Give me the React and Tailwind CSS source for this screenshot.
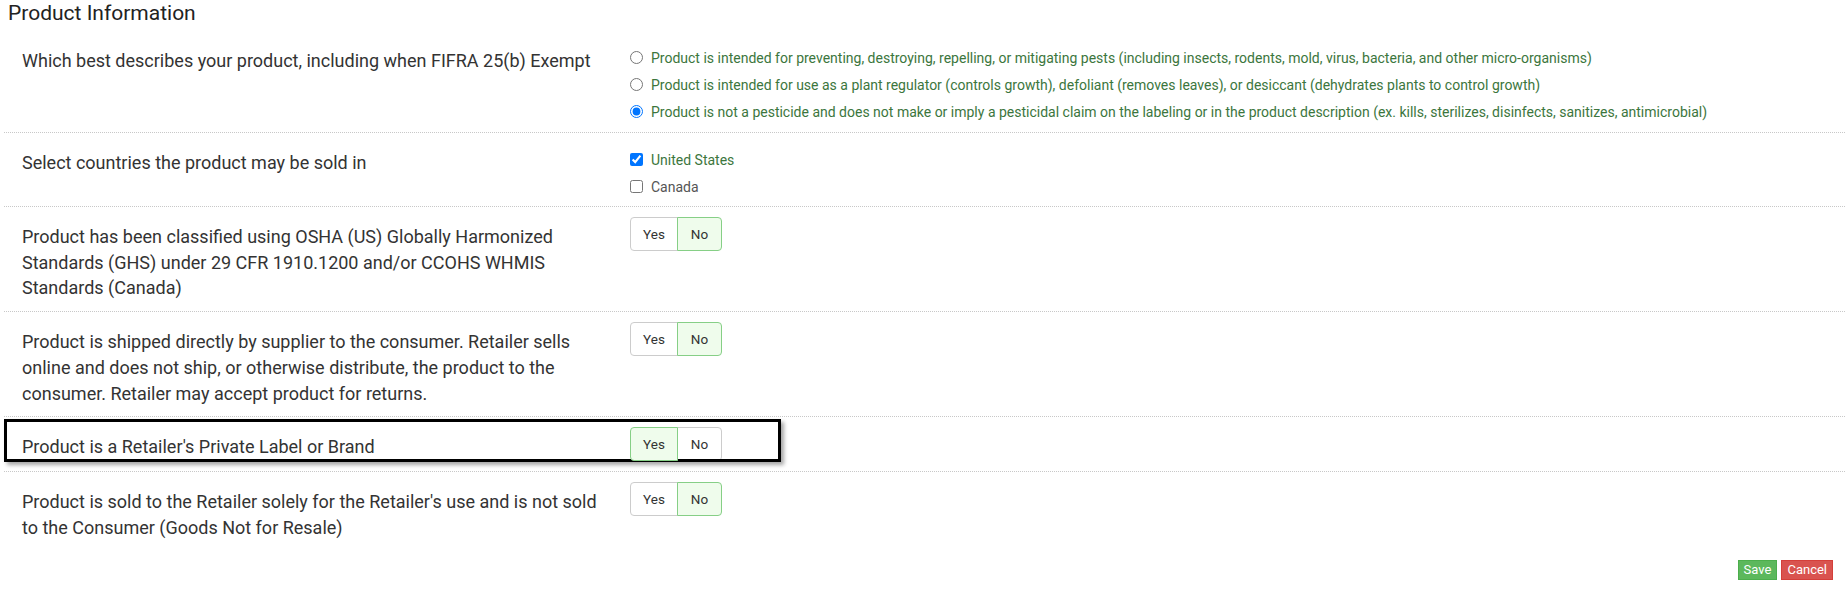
import React from "react";

const YesNo = ({ value }) => {
  const base = "h-[34px] flex items-center justify-center text-[13.5px] text-[#333] border";
  return (
    <div className="flex mt-0">
      <div
        className={
          value === "yes"
            ? base + " w-[48px] rounded-l-[4px] border-[#86cf86] bg-[#effcec] relative z-10"
            : base + " w-[48px] rounded-l-[4px] border-[#cccccc] bg-white"
        }
      >
        Yes
      </div>
      <div
        className={
          value === "no"
            ? base + " w-[45px] -ml-px rounded-r-[4px] border-[#86cf86] bg-[#effcec] relative z-10"
            : base + " w-[45px] -ml-px rounded-r-[4px] border-[#cccccc] bg-white"
        }
      >
        No
      </div>
    </div>
  );
};

const Label = ({ children }) => (
  <div className="w-[626px] shrink-0 pl-[18px] pr-[30px] pt-[7px] text-[18px] leading-[25.7px] text-[#333]">
    {children}
  </div>
);

const Option = ({ type, checked, children, color }) => (
  <label className="h-[27px] flex items-center">
    <input
      type={type}
      name={type === "radio" ? "kind" : undefined}
      defaultChecked={checked}
      className="m-0 w-[13px] h-[13px] shrink-0"
    />
    <span className={color + " ml-[8px] text-[14px] leading-[20px] whitespace-nowrap"}>{children}</span>
  </label>
);

export default function App() {
  return (
    <div
      className="w-full h-[590px] bg-white overflow-hidden"
      style={{ fontFamily: "Roboto, 'Noto Sans', sans-serif" }}
    >
      <div className="pl-[8px] pt-[1px] h-[31px] text-[21px] leading-[24px] text-[#222]">
        Product Information
      </div>

      <div className="ml-[4px]">
        {/* Row 1 */}
        <div className="flex pt-[10px] pb-[7px]">
          <Label>Which best describes your product, including when FIFRA 25(b) Exempt</Label>
          <div className="pt-[3px]">
            <Option type="radio" color="text-[#3c763d]">
              Product is intended for preventing, destroying, repelling, or mitigating pests (including insects, rodents, mold, virus, bacteria, and other micro-organisms)
            </Option>
            <Option type="radio" color="text-[#3c763d]">
              Product is intended for use as a plant regulator (controls growth), defoliant (removes leaves), or desiccant (dehydrates plants to control growth)
            </Option>
            <Option type="radio" checked color="text-[#3c763d]">
              Product is not a pesticide and does not make or imply a pesticidal claim on the labeling or in the product description (ex. kills, sterilizes, disinfects, sanitizes, antimicrobial)
            </Option>
          </div>
        </div>

        {/* Row 2 */}
        <div className="flex pt-[10px] pb-[6px] border-t border-dotted border-[#c8c8c8]">
          <Label>Select countries the product may be sold in</Label>
          <div className="pt-[3px]">
            <Option type="checkbox" checked color="text-[#3c763d]">
              United States
            </Option>
            <Option type="checkbox" color="text-[#555]">
              Canada
            </Option>
          </div>
        </div>

        {/* Row 3 */}
        <div className="flex py-[10px] border-t border-dotted border-[#c8c8c8]">
          <Label>
            Product has been classified using OSHA (US) Globally Harmonized Standards (GHS) under 29 CFR 1910.1200 and/or CCOHS WHMIS Standards (Canada)
          </Label>
          <YesNo value="no" />
        </div>

        {/* Row 4 */}
        <div className="flex py-[10px] border-t border-dotted border-[#c8c8c8]">
          <Label>
            Product is shipped directly by supplier to the consumer. Retailer sells online and does not ship, or otherwise distribute, the product to the consumer. Retailer may accept product for returns.
          </Label>
          <YesNo value="no" />
        </div>

        {/* Row 5 (highlighted) */}
        <div className="relative flex py-[10px] border-t border-dotted border-[#c8c8c8]">
          <Label>Product is a Retailer's Private Label or Brand</Label>
          <YesNo value="yes" />
          <div className="absolute top-[2px] left-0 w-[777px] h-[43px] border-[3px] border-black shadow-[3px_3px_4px_rgba(0,0,0,0.35)] pointer-events-none" />
        </div>

        {/* Row 6 */}
        <div className="flex py-[10px] border-t border-dotted border-[#c8c8c8]">
          <Label>
            Product is sold to the Retailer solely for the Retailer's use and is not sold to the Consumer (Goods Not for Resale)
          </Label>
          <YesNo value="no" />
        </div>
      </div>

      <div className="flex justify-end gap-[4px] pr-[12px] mt-[9px]">
        <button className="h-[20px] px-[5px] flex items-center text-[13px] text-white bg-[#5cb85c] border border-[#4cae4c]">
          Save
        </button>
        <button className="h-[20px] px-[5px] flex items-center text-[13px] text-white bg-[#d9534f] border border-[#d43f3a]">
          Cancel
        </button>
      </div>
    </div>
  );
}
